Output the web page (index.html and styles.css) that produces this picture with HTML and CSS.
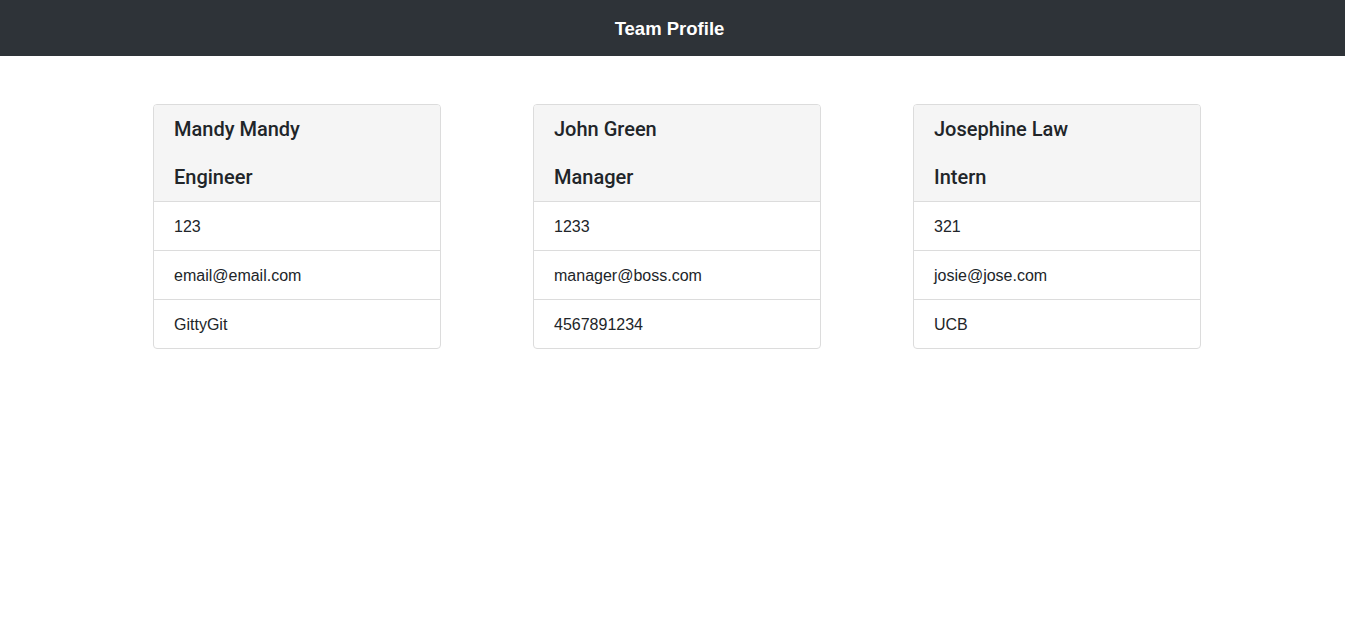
FILE: index.html
```html
<!DOCTYPE html>
<html lang="en">
<head>
<meta charset="utf-8">
<title>Team Profile</title>
<link rel="stylesheet" href="styles.css">
</head>
<body>
<header class="navbar"><span class="brand">Team Profile</span></header>
<main class="team">
  <section class="card">
    <div class="card-header">
      <h5 class="title">Mandy Mandy</h5>
      <h5 class="title">Engineer</h5>
    </div>
    <ul class="list">
      <li class="item">123</li>
      <li class="item">email@email.com</li>
      <li class="item">GittyGit</li>
    </ul>
  </section>
  <section class="card">
    <div class="card-header">
      <h5 class="title">John Green</h5>
      <h5 class="title">Manager</h5>
    </div>
    <ul class="list">
      <li class="item">1233</li>
      <li class="item">manager@boss.com</li>
      <li class="item">4567891234</li>
    </ul>
  </section>
  <section class="card">
    <div class="card-header">
      <h5 class="title">Josephine Law</h5>
      <h5 class="title">Intern</h5>
    </div>
    <ul class="list">
      <li class="item">321</li>
      <li class="item">josie@jose.com</li>
      <li class="item">UCB</li>
    </ul>
  </section>
</main>
</body>
</html>
```
FILE: styles.css
```css
* { box-sizing: border-box; }
body {
  margin: 0;
  font-family: "Liberation Sans", Arial, sans-serif;
  color: #212529;
  background: #fff;
  font-size: 16px;
  line-height: 24px;
}
.navbar {
  height: 56px;
  background: #2e3338;
  display: flex;
  align-items: center;
  justify-content: center;
  padding-top: 2px;
}
.brand {
  color: #fff;
  font-weight: bold;
  font-size: 18.5px;
  line-height: 24px;
  position: relative;
  left: -3px;
}
.team {
  display: flex;
  justify-content: center;
  gap: 92px;
  padding-left: 9px;
  margin-top: 48px;
  align-items: flex-start;
}
.card {
  width: 288px;
  border: 1px solid #dcdcdc;
  border-radius: 4px;
  overflow: hidden;
}
.card-header {
  background: #f5f5f5;
  padding: 12px 20px;
  display: flex;
  flex-direction: column;
  gap: 24px;
  border-bottom: 1px solid #dcdcdc;
}
.title {
  margin: 0;
  font-family: Roboto, "Liberation Sans", sans-serif;
  font-size: 20px;
  font-weight: 500;
  line-height: 24px;
}
.list {
  list-style: none;
  margin: 0;
  padding: 0;
}
.item {
  padding: 13px 20px 11px;
  line-height: 24px;
  border-top: 1px solid #dcdcdc;
}
.item:first-child { border-top: 0; }
```
